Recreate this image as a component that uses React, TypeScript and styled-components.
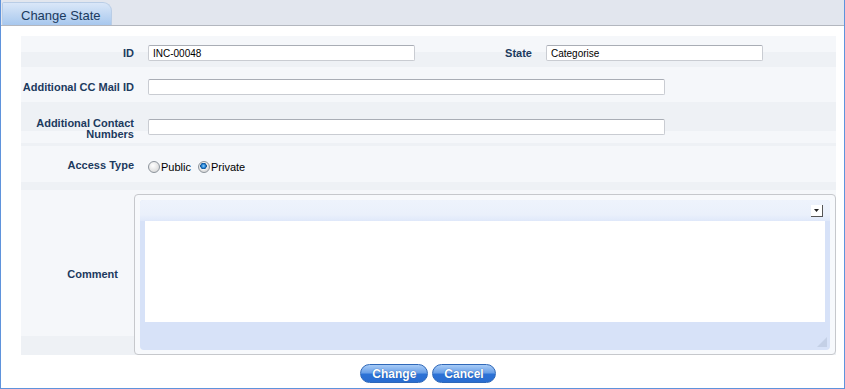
import styled, { createGlobalStyle } from "styled-components";

const GlobalStyle = createGlobalStyle`
  body {
    margin: 0;
    background: #ffffff;
    font-family: "Liberation Sans", Arial, sans-serif;
  }
`;

const LIGHT = "#f5f7fa";
const DARK = "#eef1f5";

export default function App() {
  return (
    <>
      <GlobalStyle />
      <Frame>
        <TabBar>
          <Tab>Change State</Tab>
        </TabBar>
        <Form>
          <Row $height={31} $padTop={3} $split={16}>
            <Label>ID</Label>
            <TextInput $width={267} defaultValue="INC-00048" readOnly />
            <Label $width={117}>State</Label>
            <TextInput $width={217} defaultValue="Categorise" readOnly />
          </Row>
          <Row $height={38} $padTop={2} $split={35}>
            <Label>Additional CC Mail ID</Label>
            <TextInput $width={517} />
          </Row>
          <Row $height={41} $padTop={2} $split={26} $darkFirst>
            <Label $nudge={4}>
              Additional Contact
              <br />
              Numbers
            </Label>
            <TextInput $width={517} />
          </Row>
          <Row $height={44} $padBottom={5} $split={36}>
            <Label>Access Type</Label>
            <RadioGroup>
              <RadioOption>
                <Radio />
                Public
              </RadioOption>
              <RadioOption>
                <Radio $checked />
                Private
              </RadioOption>
            </RadioGroup>
          </Row>
          <CommentRow>
            <CommentLabel>Comment</CommentLabel>
            <Editor>
              <EditorInner>
                <EditorToolbar>
                  <MenuButton>
                    <svg width="5" height="3" viewBox="0 0 5 3">
                      <path d="M0 0h5L2.5 3z" fill="#222" />
                    </svg>
                  </MenuButton>
                </EditorToolbar>
                <EditorArea />
                <EditorFooter>
                  <svg width="10" height="10" viewBox="0 0 10 10">
                    <path d="M10 0V10H0z" fill="#c4d0e6" />
                  </svg>
                </EditorFooter>
              </EditorInner>
            </Editor>
          </CommentRow>
        </Form>
        <Actions>
          <PillButton>Change</PillButton>
          <PillButton>Cancel</PillButton>
        </Actions>
      </Frame>
    </>
  );
}

const Frame = styled.div`
  box-sizing: border-box;
  width: 845px;
  height: 389px;
  border: 1px solid #5f93dc;
  border-top: none;
  display: flex;
  flex-direction: column;
`;

const TabBar = styled.div`
  height: 25px;
  background: #e2e6ee;
  border-bottom: 1px solid #b3b7bf;
  display: flex;
  align-items: flex-end;
  padding-left: 1px;
`;

const Tab = styled.div`
  width: 110px;
  height: 23px;
  box-sizing: border-box;
  padding: 5px 0 0 18px;
  border-radius: 2px 9px 0 0;
  background: linear-gradient(#dae7f8, #a8c8ee);
  border: 1px solid #b9cde6;
  border-bottom: none;
  color: #1a3a60;
  font-size: 13px;
`;

const Form = styled.div`
  display: flex;
  flex-direction: column;
  padding: 10px 8px 0 20px;
`;

/* $split: where the row's background changes shade */
const Row = styled.div<{
  $height: number;
  $padTop?: number;
  $padBottom?: number;
  $split: number;
  $darkFirst?: boolean;
}>`
  height: ${(p) => p.$height}px;
  box-sizing: border-box;
  display: flex;
  align-items: center;
  padding-top: ${(p) => p.$padTop ?? 0}px;
  padding-bottom: ${(p) => p.$padBottom ?? 0}px;
  background: ${(p) =>
    p.$darkFirst
      ? `linear-gradient(${DARK} ${p.$split}px, ${LIGHT} ${p.$split}px, ${LIGHT} calc(100% - 3px), ${DARK} calc(100% - 3px))`
      : `linear-gradient(${LIGHT} ${p.$split}px, ${DARK} ${p.$split}px)`};
`;

const Label = styled.div<{ $width?: number; $nudge?: number }>`
  width: ${(p) => p.$width ?? 113}px;
  flex-shrink: 0;
  display: flex;
  justify-content: flex-end;
  margin-top: ${(p) => p.$nudge ?? 0}px;
  text-align: right;
  white-space: nowrap;
  font-size: 11px;
  font-weight: bold;
  color: #1c3a5e;
  line-height: 11px;
`;

const TextInput = styled.input<{ $width: number }>`
  box-sizing: border-box;
  width: ${(p) => p.$width}px;
  height: 16px;
  margin-left: 14px;
  padding: 0 4px;
  border: 1px solid #c9ccd2;
  border-top-color: #a9adb5;
  border-radius: 2px;
  background: #fff;
  font-family: "Liberation Sans", Arial, sans-serif;
  font-size: 10px;
  color: #000;
  outline: none;
`;

const RadioGroup = styled.div`
  display: flex;
  gap: 7px;
  margin-left: 14px;
  padding-top: 2px;
`;

const RadioOption = styled.label`
  display: flex;
  align-items: center;
  font-size: 11px;
  color: #000;
`;

const Radio = styled.span<{ $checked?: boolean }>`
  width: 12px;
  height: 12px;
  box-sizing: border-box;
  border-radius: 50%;
  border: 1px solid #8d949c;
  background: ${(p) =>
    p.$checked
      ? "radial-gradient(circle at 45% 40%, #8fd0ff 0, #1f7dd0 2px, #0a4c8e 3px, #f3f3f3 3.5px, #dcdcdc 5px)"
      : "radial-gradient(circle at 40% 35%, #ffffff, #d0d0d0)"};
  margin-right: 1px;
`;

const CommentRow = styled.div`
  display: flex;
  align-items: stretch;
  background: linear-gradient(${LIGHT} calc(100% - 19px), ${DARK} calc(100% - 19px));
`;

const CommentLabel = styled.div`
  width: 113px;
  box-sizing: border-box;
  padding: 3px 16px 0 0;
  display: flex;
  align-items: center;
  justify-content: flex-end;
  font-size: 11px;
  font-weight: bold;
  color: #1c3a5e;
`;

const Editor = styled.div`
  width: 702px;
  height: 161px;
  box-sizing: border-box;
  margin-top: 4px;
  margin-right: -1px;
  padding: 5px 5px 4px 5px;
  border: 1px solid #c6c8cc;
  border-radius: 4px;
  background: #f7f9fc;
`;

const EditorInner = styled.div`
  height: 100%;
  display: flex;
  flex-direction: column;
  border-radius: 4px;
  background: #d7e2f8;
  overflow: hidden;
`;

const EditorToolbar = styled.div`
  height: 21px;
  display: flex;
  justify-content: flex-end;
  align-items: flex-start;
  padding: 5px 7px 0 0;
  box-sizing: border-box;
  background: linear-gradient(#eef3fc 0, #eaf0fb 70%, #dfe8fa 100%);
`;

const MenuButton = styled.div`
  width: 12px;
  height: 12px;
  box-sizing: border-box;
  display: flex;
  align-items: center;
  justify-content: center;
  background: #fff;
  border-right: 1px solid #555;
  border-bottom: 1px solid #555;
`;

const EditorArea = styled.div`
  height: 101px;
  margin: 0 5px;
  background: #fff;
`;

const EditorFooter = styled.div`
  flex: 1;
  display: flex;
  justify-content: flex-end;
  align-items: flex-end;
  padding: 0 3px 3px 0;
`;

const Actions = styled.div`
  display: flex;
  justify-content: center;
  gap: 4px;
  margin-top: 9px;
  padding-left: 11px;
`;

const PillButton = styled.button`
  height: 19px;
  padding: 0 11px;
  border-radius: 10px;
  border: 1px solid #2f68b8;
  background: linear-gradient(#a8ccf7 0, #6aa0e8 45%, #2c72d6 55%, #2a6dd0 100%);
  color: #fff;
  font-family: "Liberation Sans", Arial, sans-serif;
  font-size: 12px;
  font-weight: bold;
  text-shadow: 0 0 1px #1d4f9a;
  cursor: pointer;
`;
